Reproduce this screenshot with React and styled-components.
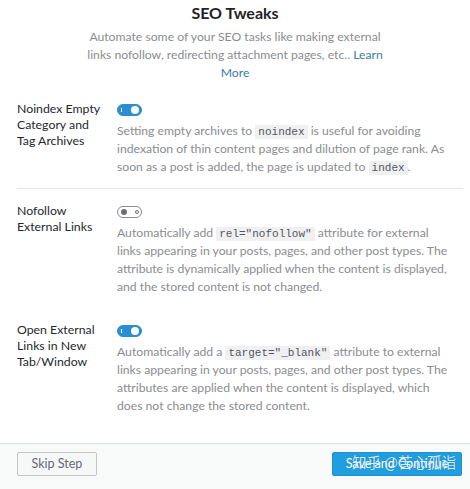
import styled, { createGlobalStyle } from "styled-components";

const GlobalStyle = createGlobalStyle`
  html, body {
    margin: 0;
    padding: 0;
    background: #fff;
  }
  body {
    font-family: "Lato", "Open Sans", sans-serif;
  }
`;

// measure = width of the description column, so lines break as in the wizard
const settings = [
  {
    label: "Noindex Empty Category and Tag Archives",
    on: true,
    divided: true,
    measure: 334,
    text: [
      "Setting empty archives to ",
      { code: "noindex" },
      " is useful for avoiding indexation of thin content pages and dilution of page rank. As soon as a post is added, the page is updated to ",
      { code: "index" },
      ".",
    ],
  },
  {
    label: "Nofollow External Links",
    on: false,
    measure: 331,
    text: [
      "Automatically add ",
      { code: 'rel="nofollow"' },
      " attribute for external links appearing in your posts, pages, and other post types. The attribute is dynamically applied when the content is displayed, and the stored content is not changed.",
    ],
  },
  {
    label: "Open External Links in New Tab/Window",
    on: true,
    measure: 334,
    text: [
      "Automatically add a ",
      { code: 'target="_blank"' },
      " attribute to external links appearing in your posts, pages, and other post types. The attributes are applied when the content is displayed, which does not change the stored content.",
    ],
  },
];

export default function App() {
  return (
    <Page>
      <GlobalStyle />
      <Header>
        <Title>SEO Tweaks</Title>
        <Intro>
          Automate some of your SEO tasks like making external links nofollow,
          redirecting attachment pages, etc.. <LearnMore>Learn More</LearnMore>
        </Intro>
      </Header>

      <List>
        {settings.map((s) => (
          <Row key={s.label} divided={s.divided}>
            <Label>{s.label}</Label>
            <Control>
              <Toggle on={s.on}>
                {s.on ? <OnMark /> : <OffMark />}
                <Knob on={s.on} />
              </Toggle>
              <Description measure={s.measure}>
                {s.text.map((part, i) =>
                  typeof part === "string" ? part : <Code key={i}>{part.code}</Code>
                )}
              </Description>
            </Control>
          </Row>
        ))}
      </List>

      <Footer>
        <SkipButton>Skip Step</SkipButton>
        <SaveButton>
          Save and Continue
          <Watermark>知乎 @苦心孤诣</Watermark>
        </SaveButton>
      </Footer>
    </Page>
  );
}

const Page = styled.div`
  width: 470px;
  height: 489px;
  display: flex;
  flex-direction: column;
  overflow: hidden;
`;

const Header = styled.header`
  display: flex;
  flex-direction: column;
  align-items: center;
  padding-top: 1px;
`;

const Title = styled.h1`
  margin: 0;
  font-size: 16px;
  line-height: 24px;
  font-weight: 700;
  color: #1d2327;
`;

const Intro = styled.p`
  margin: 3px 0 0;
  width: 300px;
  text-align: center;
  font-size: 12.2px;
  line-height: 18px;
  color: #8a8d90;
`;

const LearnMore = styled.a`
  color: #3a7ca5;
  text-decoration: none;
`;

const List = styled.div`
  margin: 5px 7px 0 17px;
  display: flex;
  flex-direction: column;
`;

const Row = styled.div`
  display: grid;
  grid-template-columns: 100px 1fr;
  padding: 14px 0 12px;
  border-bottom: ${(props) => (props.divided ? "1px solid #e2e4e7" : "none")};
`;

const Label = styled.div`
  font-size: 12.3px;
  line-height: 16px;
  color: #23282d;
  padding-right: 8px;
`;

const Control = styled.div`
  display: flex;
  flex-direction: column;
  align-items: flex-start;
  padding-top: 3px;
`;

const Toggle = styled.span`
  display: flex;
  align-items: center;
  justify-content: space-between;
  box-sizing: border-box;
  width: 25px;
  height: 12px;
  padding: 0 2px 0 3px;
  border-radius: 6px;
  background: ${(props) => (props.on ? "#2a8fd0" : "#fff")};
  border: 1px solid ${(props) => (props.on ? "#2a8fd0" : "#8a8d90")};
  flex-direction: ${(props) => (props.on ? "row" : "row-reverse")};
`;

const Knob = styled.span`
  width: ${(props) => (props.on ? "8px" : "6px")};
  height: ${(props) => (props.on ? "8px" : "6px")};
  border-radius: 50%;
  background: ${(props) => (props.on ? "#fff" : "#6c6f72")};
`;

const OnMark = styled.span`
  width: 1px;
  height: 4px;
  background: #fff;
`;

const OffMark = styled.span`
  box-sizing: border-box;
  width: 4px;
  height: 4px;
  border-radius: 50%;
  border: 1px solid #6c6f72;
`;

const Description = styled.p`
  margin: 6px 0 0;
  width: ${(props) => props.measure}px;
  font-size: 12.2px;
  line-height: 18px;
  color: #8a8d90;
`;

const Code = styled.code`
  font-family: "Liberation Mono", "DejaVu Sans Mono", monospace;
  font-size: 11px;
  line-height: 1;
  color: #50575e;
  background: #f0f0f1;
  padding: 1px 3px;
`;

const Footer = styled.footer`
  margin-top: auto;
  height: 37px;
  border-top: 1px solid #dcdcde;
  background: #f8f9f9;
  display: flex;
  justify-content: space-between;
  align-items: flex-start;
  padding: 8px 8px 0 17px;
`;

const Button = styled.button`
  height: 24px;
  box-sizing: border-box;
  font-family: "Lato", "Open Sans", sans-serif;
  font-size: 12.5px;
  line-height: 1;
  border-radius: 2px;
  padding: 0;
`;

const SkipButton = styled(Button)`
  width: 80px;
  background: #f6f7f7;
  color: #646970;
  border: 1px solid #c3c4c7;
`;

const SaveButton = styled(Button)`
  position: relative;
  width: 130px;
  background: #1f9ee0;
  color: #fff;
  border: 1px solid #1a92d2;
`;

const Watermark = styled.span`
  position: absolute;
  left: 19px;
  top: 0;
  font-family: "Noto Sans CJK SC", sans-serif;
  font-size: 14.5px;
  line-height: 18px;
  color: rgba(255, 255, 255, 0.85);
  white-space: nowrap;
  text-shadow: 0 0 1px rgba(0, 0, 0, 0.3);
`;
